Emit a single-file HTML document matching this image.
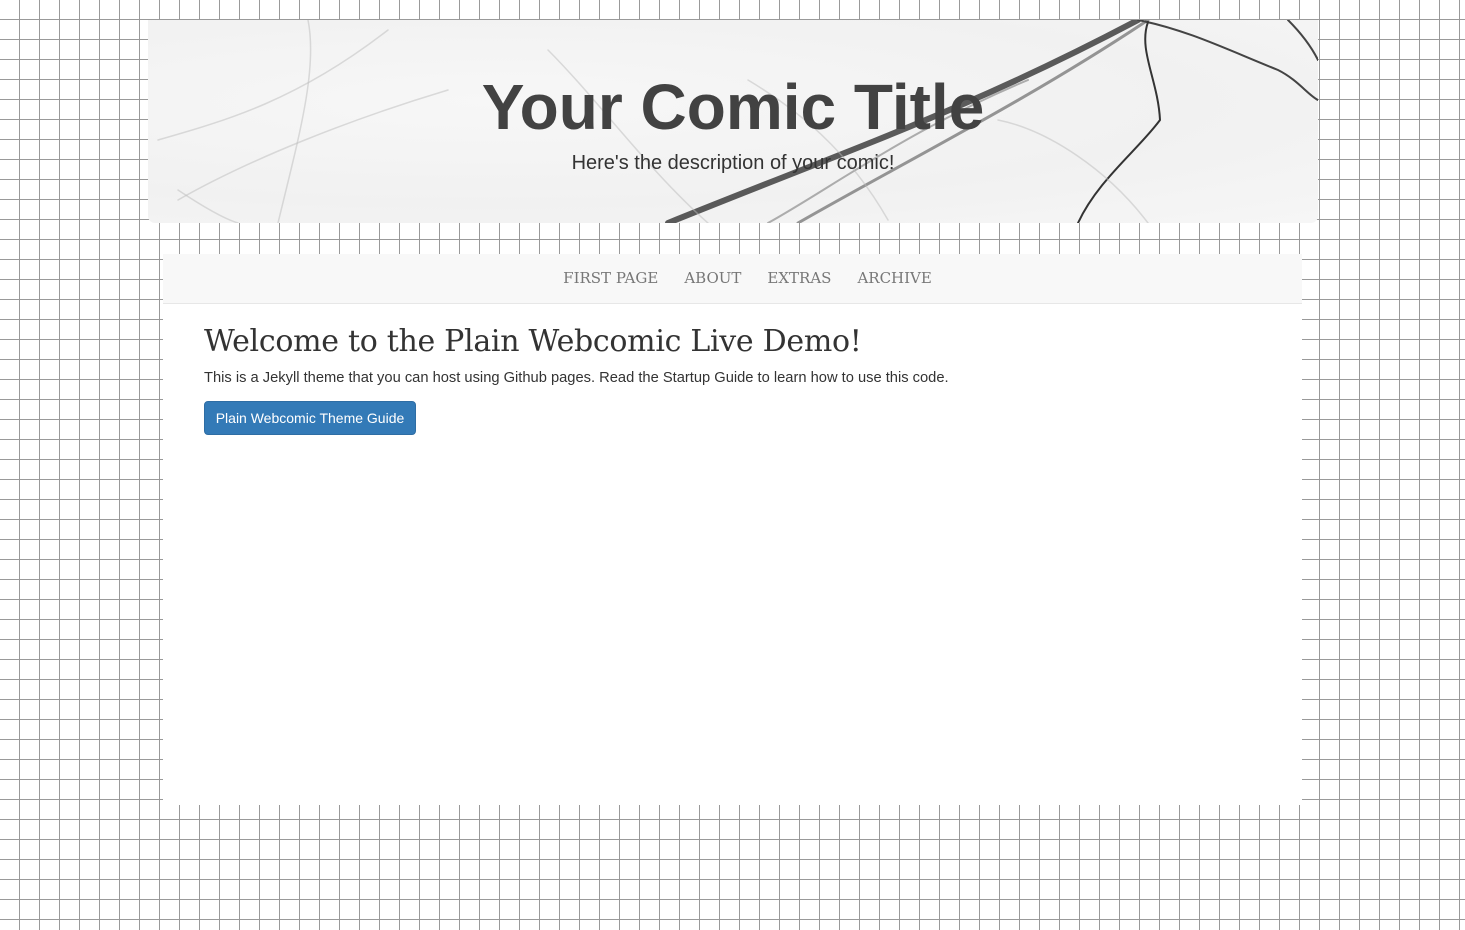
<!DOCTYPE html>
<html><head><meta charset="utf-8"><style>
*{margin:0;padding:0;box-sizing:border-box}
html,body{width:1465px;height:930px;overflow:hidden}
body{background-color:#fff;background-image:linear-gradient(to right,#999 1px,transparent 1px),linear-gradient(to bottom,#999 1px,transparent 1px);background-size:20px 20px;background-position:19px 19px;font-family:"Liberation Sans",sans-serif;position:relative}
.banner{position:absolute;left:148px;top:20px;width:1170px;height:203px;border-radius:0 0 7px 7px;background:radial-gradient(ellipse at 30% 40%,#f7f7f7,#f1f1f1 60%,#f6f6f6);overflow:hidden}
.banner svg{position:absolute;left:0;top:0}
.title{position:absolute;left:0;width:100%;top:50px;text-align:center;font-weight:bold;font-size:64px;color:#424242}
.desc{position:absolute;left:0;width:100%;top:132px;text-align:center;font-size:20px;color:#333}
.main{position:absolute;left:163px;top:254px;width:1139px;height:551px;background:#fff}
.nav{height:50px;background:#f8f8f8;border-bottom:1px solid #e7e7e7;text-align:center;font-family:"DejaVu Serif","Liberation Serif",serif;font-size:15px;color:#777;padding-top:15px;padding-left:30px}
.nav span{margin:0 13px}
h1{position:absolute;left:41px;top:70px;font-family:"DejaVu Serif",serif;font-weight:normal;font-size:30px;color:#333;letter-spacing:-0.3px}
p{position:absolute;left:41px;top:116px;font-size:14.7px;color:#333}
.btn{position:absolute;left:41px;top:147px;width:212px;height:34px;background:#337ab7;border:1px solid #2e6da4;border-radius:4px;color:#fff;font-size:14px;text-align:center;line-height:32px}
</style></head><body>
<div class="banner">
<svg width="1170" height="203" fill="none" stroke-linecap="round">
<path d="M520 203 C700 130 820 90 990 0" stroke="#333" stroke-width="6" opacity=".8"/>
<path d="M650 203 C760 140 880 80 1000 0" stroke="#555" stroke-width="3" opacity=".6"/>
<path d="M990 0 C1040 10 1080 30 1130 50 C1150 60 1160 75 1170 80" stroke="#444" stroke-width="2"/>
<path d="M1000 2 C990 30 1010 60 1012 100 C990 130 950 160 930 203" stroke="#333" stroke-width="2"/>
<path d="M620 203 C680 170 760 110 880 60" stroke="#666" stroke-width="2" opacity=".5"/>
<path d="M1140 0 C1155 15 1165 30 1170 40" stroke="#444" stroke-width="2"/>
<path d="M10 120 C80 100 150 80 240 10 M30 180 C100 140 200 100 300 70 M600 60 C650 90 700 130 740 200 M400 30 C450 80 500 150 560 203" stroke="#bbb" stroke-width="1.5" opacity=".5"/>
<path d="M30 170 C60 190 80 200 90 203 M160 0 C170 50 150 120 130 203 M850 100 C900 110 960 150 1000 203" stroke="#bbb" stroke-width="1.5" opacity=".5"/>
</svg>
<div class="title">Your Comic Title</div>
<div class="desc">Here's the description of your comic!</div>
</div>
<div class="main">
<div class="nav"><span>FIRST PAGE</span><span>ABOUT</span><span>EXTRAS</span><span>ARCHIVE</span></div>
<h1>Welcome to the Plain Webcomic Live Demo!</h1>
<p>This is a Jekyll theme that you can host using Github pages. Read the Startup Guide to learn how to use this code.</p>
<div class="btn">Plain Webcomic Theme Guide</div>
</div>
</body></html>
